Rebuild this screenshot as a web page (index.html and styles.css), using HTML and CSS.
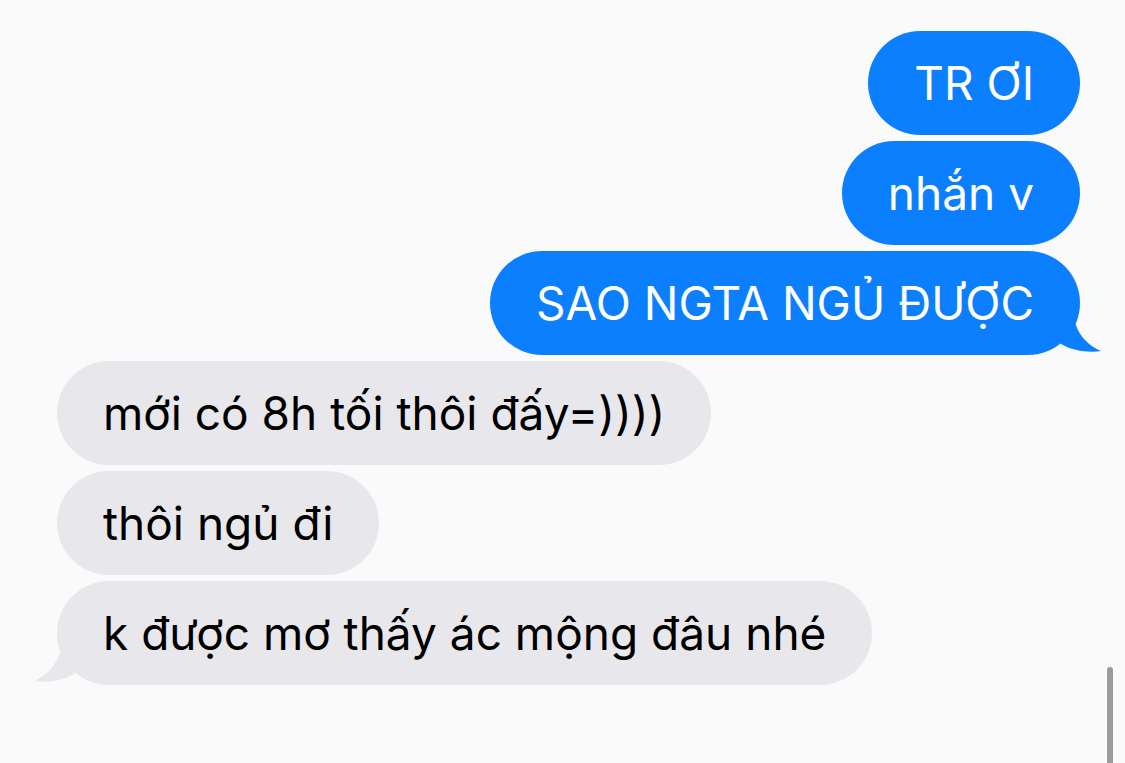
FILE: index.html
```html
<!DOCTYPE html>
<html lang="vi">
  <head>
    <meta charset="UTF-8" />
    <title>Tin nhắn</title>
    <link rel="stylesheet" href="styles.css">
  </head>
  <body>
    <main class="chat">
      <p class="bubble sent">TR ƠI</p>
      <p class="bubble sent">nhắn v</p>
      <p class="bubble sent last">
        SAO NGTA NGỦ ĐƯỢC
        <svg class="tail" width="44" height="40" viewBox="0 0 44 40">
          <path d="M0 0 L14 0 C16 16 24 30 42 38 C30 40 14 38 2 31 C-4 22 -2 10 0 0 Z" />
        </svg>
      </p>
      <p class="bubble got">mới có 8h tối thôi đấy=))))</p>
      <p class="bubble got">thôi ngủ đi</p>
      <p class="bubble got last">
        k được mơ thấy ác mộng đâu nhé
        <svg class="tail" width="44" height="40" viewBox="0 0 44 40">
          <path d="M44 0 L30 0 C28 16 20 30 2 38 C14 40 30 38 42 31 C48 22 46 10 44 0 Z" />
        </svg>
      </p>
    </main>
    <div class="scrollbar"></div>
  </body>
</html>
```

FILE: styles.css
```css
body {
  margin: 0;
  padding: 0;
  background-color: #fafafa;
  font-family: "Inter", "Noto Sans", sans-serif;
  overflow: hidden;
}

.chat {
  display: flex;
  flex-direction: column;
  gap: 6px;
  padding: 31px 45px 0 57px;
}

.bubble {
  position: relative;
  margin: 0;
  padding: 25px 46px;
  font-size: 46px;
  line-height: 54px;
  border-radius: 52px;
  white-space: nowrap;
}

.sent {
  align-self: flex-end;
  background-color: #0b7ffe;
  color: #ffffff;
}

.got {
  align-self: flex-start;
  background-color: #e8e7ec;
  color: #000000;
}

.tail {
  position: absolute;
  bottom: 2px;
}

.sent .tail {
  right: -23px;
  fill: #0b7ffe;
}

.got .tail {
  left: -25px;
  fill: #e8e7ec;
}

.scrollbar {
  position: fixed;
  right: 12px;
  bottom: 0;
  width: 6px;
  height: 96px;
  border-radius: 3px 3px 0 0;
  background-color: #9b9b9b;
}
```
